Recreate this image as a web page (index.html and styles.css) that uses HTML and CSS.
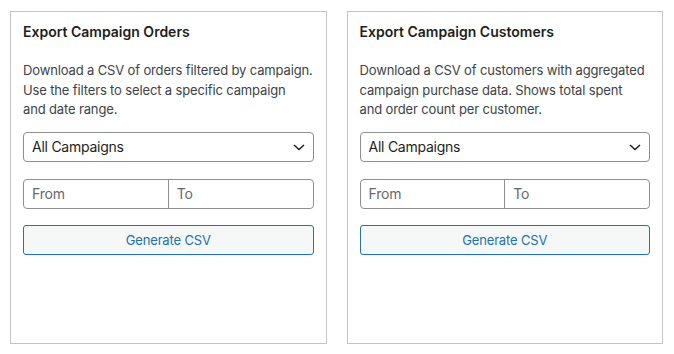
FILE: index.html
```html
<!DOCTYPE html>
<html lang="en">
<head>
  <meta charset="UTF-8">
  <title>Campaign Exports</title>
  <meta name="viewport" content="width=device-width, initial-scale=1.0">
  <link rel="stylesheet" href="styles.css">
</head>
<body>
  <div class="exports">
    <div class="card">
      <h2>Export Campaign Orders</h2>
      <p class="desc">Download a CSV of orders filtered by campaign.<br>Use the filters to select a specific campaign<br>and date range.</p>
      <div class="select-wrap">
        <select>
          <option>All Campaigns</option>
        </select>
        <svg class="chevron" width="12" height="7" viewBox="0 0 12 7"><path d="M1 1l5 4.5L11 1" fill="none" stroke="#1e1e1e" stroke-width="1.5"/></svg>
      </div>
      <div class="dates">
        <input type="text" placeholder="From">
        <input type="text" placeholder="To">
      </div>
      <button>Generate CSV</button>
    </div>

    <div class="card">
      <h2>Export Campaign Customers</h2>
      <p class="desc">Download a CSV of customers with aggregated<br>campaign purchase data. Shows total spent<br>and order count per customer.</p>
      <div class="select-wrap">
        <select>
          <option>All Campaigns</option>
        </select>
        <svg class="chevron" width="12" height="7" viewBox="0 0 12 7"><path d="M1 1l5 4.5L11 1" fill="none" stroke="#1e1e1e" stroke-width="1.5"/></svg>
      </div>
      <div class="dates">
        <input type="text" placeholder="From">
        <input type="text" placeholder="To">
      </div>
      <button>Generate CSV</button>
    </div>
  </div>
</body>
</html>
```

FILE: styles.css
```css
html, body {
  margin: 0;
  height: 100%;
}

body {
  background: #fff;
  font-family: Inter, "Noto Sans", sans-serif;
  color: #1e1e1e;
}

.exports {
  display: flex;
  gap: 20px;
  height: 100%;
  box-sizing: border-box;
  padding: 11px 11px 10px 10px;
}

.card {
  flex: 1 1 0;
  min-width: 0;
  border: 1px solid #c3c4c7;
  background: #fff;
  padding: 10px 12px 12px;
}

.card h2 {
  margin: 0 0 19px;
  font-size: 14px;
  font-weight: 600;
  line-height: 20px;
}

.desc {
  margin: 0 0 12px;
  font-size: 13px;
  line-height: 19.5px;
  letter-spacing: -0.14px;
  white-space: nowrap;
  color: #3c434a;
}

.select-wrap {
  position: relative;
  margin-bottom: 17px;
}

.select-wrap select {
  appearance: none;
  -webkit-appearance: none;
  width: 100%;
  height: 30px;
  box-sizing: border-box;
  border: 1px solid #8c8f94;
  border-radius: 4px;
  background: #fff;
  padding: 0 24px 0 8px;
  font-family: inherit;
  font-size: 14px;
  letter-spacing: -0.25px;
  color: #1e1e1e;
}

.chevron {
  position: absolute;
  right: 9px;
  top: 12px;
  pointer-events: none;
}

.dates {
  display: flex;
  height: 30px;
  box-sizing: border-box;
  border: 1px solid #8c8f94;
  border-radius: 4px;
  margin-bottom: 16px;
}

.dates input {
  flex: 1 1 0;
  min-width: 0;
  border: none;
  background: transparent;
  padding: 0 8px;
  font-family: inherit;
  font-size: 14px;
  letter-spacing: -0.2px;
  outline: none;
}

.dates input + input {
  border-left: 1px solid #8c8f94;
}

.dates input::placeholder {
  color: #646970;
}

button {
  width: 100%;
  height: 30px;
  border: 1px solid #2271b1;
  border-radius: 3px;
  background: #f6f7f7;
  color: #2271b1;
  font-family: inherit;
  font-size: 13px;
  letter-spacing: -0.15px;
  cursor: pointer;
}
```
